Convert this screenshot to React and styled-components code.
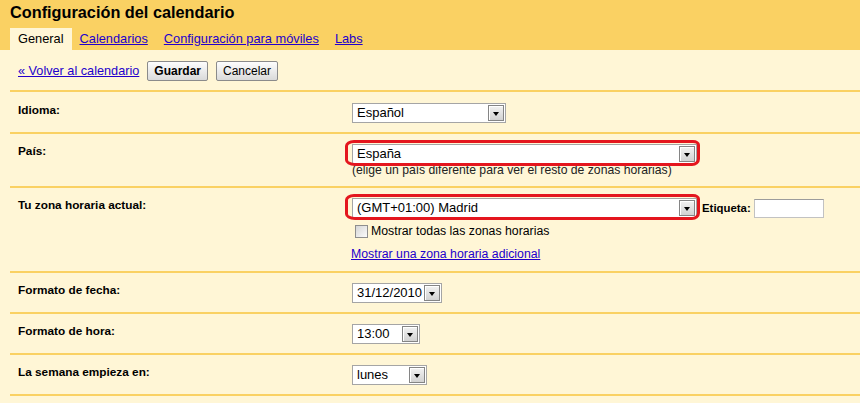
import React from 'react';
import styled, { createGlobalStyle } from 'styled-components';

const YELLOW = '#fad163';
const CREAM = '#fff6d6';
const LINK = '#2200cc';

const GlobalStyle = createGlobalStyle`
  html, body {
    margin: 0;
    padding: 0;
  }

  body {
    background: ${CREAM};
    font-family: "Liberation Sans", Arial, sans-serif;
    color: #000;
    overflow: hidden;
  }
`;

const tabs = [
  { label: 'General', active: true },
  { label: 'Calendarios' },
  { label: 'Configuración para móviles' },
  { label: 'Labs' },
];

function Select({ value, width }) {
  return (
    <SelectBox $width={width}>
      <SelectText>{value}</SelectText>
      <SelectArrow />
    </SelectBox>
  );
}

function Highlighted({ children }) {
  return (
    <HighlightWrap>
      {children}
      <Ring />
    </HighlightWrap>
  );
}

export default function App() {
  return (
    <Page>
      <GlobalStyle />
      <Header>
        <Title>Configuración del calendario</Title>
        <TabBar>
          {tabs.map((tab) => (
            <Tab key={tab.label} $active={tab.active}>
              {tab.label}
            </Tab>
          ))}
        </TabBar>
      </Header>

      <Content>
        <ActionBar>
          <BackLink>« Volver al calendario</BackLink>
          <Button $primary>Guardar</Button>
          <Button>Cancelar</Button>
        </ActionBar>

        <Settings>
          <Row $pad={11}>
            <Label>Idioma:</Label>
            <Value>
              <Select value="Español" width={154} />
            </Value>
          </Row>

          <Row>
            <Label>País:</Label>
            <Value>
              <Highlighted>
                <Select value="España" width={345} />
              </Highlighted>
              <Hint>(elige un país diferente para ver el resto de zonas horarias)</Hint>
            </Value>
          </Row>

          <Row>
            <Label>Tu zona horaria actual:</Label>
            <Value>
              <ZoneLine>
                <Highlighted>
                  <Select value="(GMT+01:00) Madrid" width={345} />
                </Highlighted>
                <InlineLabel>Etiqueta:</InlineLabel>
                <TextInput />
              </ZoneLine>
              <CheckRow>
                <Checkbox />
                <CheckText>Mostrar todas las zonas horarias</CheckText>
              </CheckRow>
              <AddLink>Mostrar una zona horaria adicional</AddLink>
            </Value>
          </Row>

          <Row>
            <Label>Formato de fecha:</Label>
            <Value>
              <Select value="31/12/2010" width={90} />
            </Value>
          </Row>

          <Row>
            <Label>Formato de hora:</Label>
            <Value>
              <Select value="13:00" width={68} />
            </Value>
          </Row>

          <Row>
            <Label>La semana empieza en:</Label>
            <Value>
              <Select value="lunes" width={75} />
            </Value>
          </Row>
        </Settings>
      </Content>
    </Page>
  );
}

const Page = styled.div`
  width: 100%;
  min-height: 403px;
  background: ${CREAM};
`;

const Header = styled.header`
  background: ${YELLOW};
  padding: 2px 0 0 10px;
  height: 50px;
  box-sizing: border-box;
`;

const Title = styled.h1`
  margin: 0;
  font-size: 16.3px;
  line-height: 20px;
  font-weight: bold;
`;

const TabBar = styled.nav`
  display: flex;
  margin-top: 6px;
`;

const Tab = styled.span`
  padding: 3px 8px 4px;
  font-size: 12.8px;
  line-height: 15px;
  color: ${(p) => (p.$active ? '#000' : LINK)};
  text-decoration: ${(p) => (p.$active ? 'none' : 'underline')};
  background: ${(p) => (p.$active ? CREAM : 'transparent')};
  white-space: nowrap;
`;

const Content = styled.main`
  padding-left: 10px;
`;

const ActionBar = styled.div`
  display: flex;
  align-items: center;
  gap: 8px;
  height: 40px;
  box-sizing: border-box;
  padding: 2px 0 0 8px;
`;

const BackLink = styled.a`
  font-size: 12.7px;
  color: ${LINK};
  text-decoration: underline;
  cursor: pointer;
`;

const Button = styled.button`
  height: 20px;
  padding: 0 6px;
  border: 1px solid #8b8b8b;
  border-radius: 2px;
  background: linear-gradient(#fdfdfd, #dadada);
  font-family: inherit;
  font-size: 12px;
  font-weight: ${(p) => (p.$primary ? 'bold' : 'normal')};
  color: #000;
  line-height: 16px;
`;

const Settings = styled.section`
  border-top: 2px solid ${YELLOW};
`;

const Row = styled.div`
  display: grid;
  grid-template-columns: 342px 1fr;
  padding: ${(p) => p.$pad || 10}px 0 9px;
  border-bottom: 2px solid ${YELLOW};
`;

const Label = styled.div`
  padding: 1px 0 0 8px;
  font-size: 11.8px;
  line-height: 13px;
  font-weight: bold;
`;

const Value = styled.div`
  display: flex;
  flex-direction: column;
  align-items: flex-start;
`;

const SelectBox = styled.div`
  display: flex;
  align-items: center;
  width: ${(p) => p.$width}px;
  height: 20px;
  box-sizing: border-box;
  border: 1px solid #a5a5a5;
  background: #fff;
`;

const SelectText = styled.span`
  flex: 1;
  padding-left: 4px;
  font-size: 13px;
  line-height: 18px;
  white-space: nowrap;
  overflow: hidden;
`;

const SelectArrow = styled.span`
  width: 16px;
  height: 16px;
  margin-right: 1px;
  box-sizing: border-box;
  border: 1px solid #858585;
  background: linear-gradient(#f2f2f2, #d2d2d2);
  box-shadow: inset 1px 1px 0 #fff;
  display: flex;
  align-items: center;
  justify-content: center;

  &::after {
    content: '';
    border-left: 3.5px solid transparent;
    border-right: 3.5px solid transparent;
    border-top: 4px solid #000;
    margin-top: 2px;
  }
`;

const HighlightWrap = styled.div`
  position: relative;
`;

const Ring = styled.span`
  position: absolute;
  top: -4px;
  right: -3px;
  bottom: -2px;
  left: -7px;
  border: 3px solid #e4161e;
  border-radius: 9px 7px 8px 10px / 6px 5px 7px 6px;
  pointer-events: none;
`;

const Hint = styled.div`
  margin-top: -1px;
  font-size: 12.2px;
  line-height: 14px;
  color: #222;
`;

const ZoneLine = styled.div`
  display: flex;
  align-items: center;
`;

const InlineLabel = styled.span`
  margin: 0 3px 0 5px;
  font-size: 11.4px;
  font-weight: bold;
`;

const TextInput = styled.span`
  display: block;
  width: 70px;
  height: 19px;
  box-sizing: border-box;
  border: 1px solid #c2c2c2;
  border-top-color: #9c9c9c;
  background: #fff;
`;

const CheckRow = styled.label`
  display: flex;
  align-items: center;
  height: 15px;
  margin: 6px 0 0 3px;
`;

const Checkbox = styled.span`
  width: 13px;
  height: 13px;
  box-sizing: border-box;
  border: 1px solid #8e8e8e;
  background: linear-gradient(135deg, #d6d6d6, #fbfbfb);
`;

const CheckText = styled.span`
  margin-left: 3px;
  font-size: 12.3px;
  line-height: 15px;
`;

const AddLink = styled.a`
  margin: 8px 0 0 -1px;
  font-size: 12.3px;
  line-height: 15px;
  color: ${LINK};
  text-decoration: underline;
  cursor: pointer;
`;
